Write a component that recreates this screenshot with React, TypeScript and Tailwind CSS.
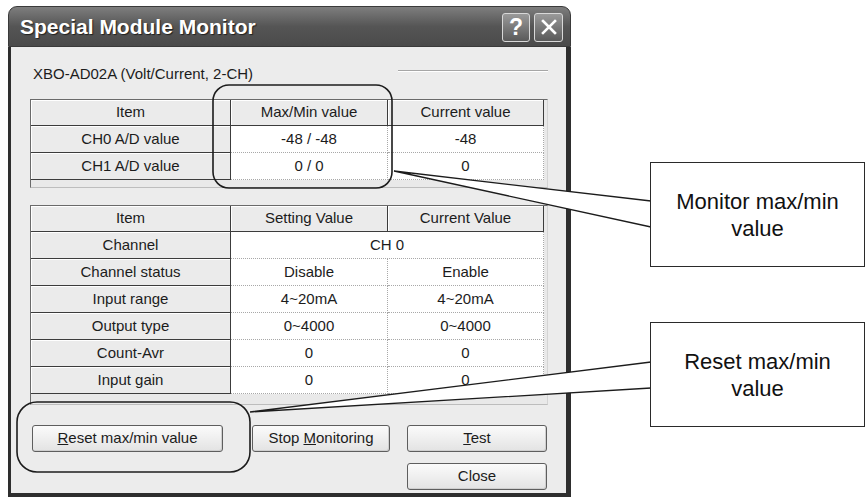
import React from 'react'

const font = { fontFamily: '"Liberation Sans", Arial, sans-serif' }

type Row = { item: string; a: string; b?: string }

const topRows: Row[] = [
  { item: 'CH0 A/D value', a: '-48 / -48', b: '-48' },
  { item: 'CH1 A/D value', a: '0 / 0', b: '0' },
]

const settingRows: Row[] = [
  { item: 'Channel', a: 'CH 0' },
  { item: 'Channel status', a: 'Disable', b: 'Enable' },
  { item: 'Input range', a: '4~20mA', b: '4~20mA' },
  { item: 'Output type', a: '0~4000', b: '0~4000' },
  { item: 'Count-Avr', a: '0', b: '0' },
  { item: 'Input gain', a: '0', b: '0' },
]

function HeadCell({ children, h = 'h-[27px]' }: { children: React.ReactNode; h?: string }) {
  return (
    <div className={`${h} flex items-center justify-center bg-[#ebebeb] border-r border-b border-[#3c3c3c] shadow-[inset_1px_1px_0_#ffffff]`}>
      {children}
    </div>
  )
}

function DataCell({ children, span = false }: { children: React.ReactNode; span?: boolean }) {
  return (
    <div className={`h-[27px] flex items-center justify-center bg-white border-r border-b border-dotted border-[#a8a8a8] ${span ? 'col-span-2' : ''}`}>
      {children}
    </div>
  )
}

function Grid({ head, rows, h }: { head: string[]; rows: Row[]; h: string }) {
  return (
    <div className={`${h} bg-[#e9e9e9] border border-t-[#6a6a6a] border-l-[#6a6a6a] border-r-[#d4d4d4] border-b-[#bdbdbd]`}>
      <div className="grid grid-cols-[200px_157px_156px] text-[15px] text-[#1c1c1c]">
        {head.map((t) => (
          <HeadCell key={t} h="h-[26px]">{t}</HeadCell>
        ))}
        {rows.map((r) => (
          <React.Fragment key={r.item}>
            <HeadCell>{r.item}</HeadCell>
            {r.b === undefined ? (
              <DataCell span>{r.a}</DataCell>
            ) : (
              <>
                <DataCell>{r.a}</DataCell>
                <DataCell>{r.b}</DataCell>
              </>
            )}
          </React.Fragment>
        ))}
      </div>
    </div>
  )
}

function Btn({ children, w }: { children: React.ReactNode; w: string }) {
  return (
    <div className={`${w} h-[27px] flex items-center justify-center rounded-[3px] border border-[#5e5e5e] bg-gradient-to-b from-[#fbfbfb] to-[#e3e3e3] shadow-[inset_-1px_-1px_0_#cfcfcf] text-[15px] text-[#1c1c1c]`}>
      {children}
    </div>
  )
}

export default function App() {
  return (
    <div className="relative w-[867px] h-[498px] overflow-hidden bg-white" style={font}>
      {/* dialog window */}
      <div className="ml-[8px] mt-[6px] w-[563px] h-[491px] flex flex-col">
        <div className="h-[41px] shrink-0 rounded-t-[9px] bg-gradient-to-b from-[#7e7e7e] via-[#555555] to-[#4a4a4a] border border-[#3a3a3a] flex items-center pl-[11px] pr-[7px]">
          <span className="text-[21px] font-bold text-white [text-shadow:1px_1px_1px_#202020]">
            Special Module Monitor
          </span>
          <div className="ml-auto flex gap-[4px] pt-[1px]">
            <div className="w-[28px] h-[29px] rounded-[3px] border border-[#d8d8d8] bg-gradient-to-b from-[#9a9a9a] to-[#5a5a5a] flex items-center justify-center text-white text-[23px] font-bold leading-none">
              ?
            </div>
            <div className="w-[29px] h-[29px] rounded-[3px] border border-[#d8d8d8] bg-gradient-to-b from-[#9a9a9a] to-[#5a5a5a] flex items-center justify-center">
              <svg width="18" height="18" viewBox="0 0 18 18">
                <path d="M3 3 L15 15 M15 3 L3 15" stroke="#fff" strokeWidth="2.6" strokeLinecap="square" />
              </svg>
            </div>
          </div>
        </div>

        <div className="flex-1 flex flex-col bg-[#ececec] border-l-[3px] border-r-[5px] border-b-[4px] border-[#2e2e2e] pl-[19px] pr-[18px]">
          <div className="mt-[17px] h-[20px] flex items-center text-[15px] text-[#1c1c1c]">
            <span className="ml-[3px]">XBO-AD02A (Volt/Current, 2-CH)</span>
            <div className="ml-auto mb-[6px] w-[150px] border-t border-b border-t-[#a6a6a6] border-b-white" />
          </div>

          <div className="mt-[15px]">
            <Grid head={['Item', 'Max/Min value', 'Current value']} rows={topRows} h="h-[89px]" />
          </div>

          <div className="mt-[17px]">
            <Grid head={['Item', 'Setting Value', 'Current Value']} rows={settingRows} h="h-[200px]" />
          </div>

          <div className="mt-[20px] flex items-start">
            <div className="ml-[2px]">
              <Btn w="w-[191px]">
                <span><span className="underline">R</span>eset max/min value</span>
              </Btn>
            </div>
            <div className="ml-[29px]">
              <Btn w="w-[138px]">
                <span>Stop <span className="underline">M</span>onitoring</span>
              </Btn>
            </div>
            <div className="ml-[17px] flex flex-col gap-[11px]">
              <Btn w="w-[140px]">
                <span><span className="underline">T</span>est</span>
              </Btn>
              <Btn w="w-[140px]">Close</Btn>
            </div>
          </div>
        </div>
      </div>

      {/* annotation drawing */}
      <svg className="absolute left-0 top-0 pointer-events-none" width="867" height="498" viewBox="0 0 867 498">
        <rect x="213" y="85" width="179" height="103" rx="16" fill="none" stroke="#1c1c1c" strokeWidth="1.6" />
        <rect x="17" y="402" width="233" height="70" rx="20" fill="none" stroke="#1c1c1c" strokeWidth="1.6" />
        <polygon points="394,171 651,201 651,227" fill="#fff" />
        <path d="M394 171 L651 201 M394 171 L651 227" stroke="#1c1c1c" strokeWidth="1.3" fill="none" />
        <polygon points="250,412 651,362 651,388" fill="#fff" />
        <path d="M250 412 L651 362 M250 412 L651 388" stroke="#1c1c1c" strokeWidth="1.3" fill="none" />
      </svg>

      <div className="absolute left-[650px] top-[162px] w-[215px] h-[105px] border border-[#2a2a2a] bg-white flex items-center justify-center text-center text-[22px] leading-[27px] text-[#111]">
        Monitor max/min
        <br />
        value
      </div>
      <div className="absolute left-[650px] top-[322px] w-[215px] h-[105px] border border-[#2a2a2a] bg-white flex items-center justify-center text-center text-[22px] leading-[27px] text-[#111]">
        Reset max/min
        <br />
        value
      </div>
    </div>
  )
}
